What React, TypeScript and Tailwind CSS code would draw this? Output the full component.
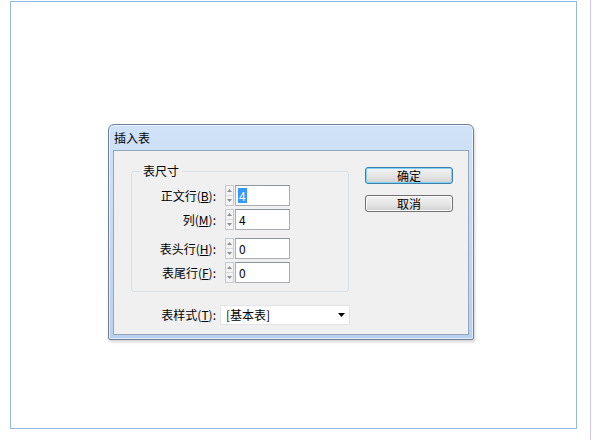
import React from "react";

const font = { fontFamily: '"Noto Sans CJK SC", "Noto Sans", sans-serif' };

const Spinner = () => (
  <div className="flex h-[21px] w-[9px] flex-col border border-[#c5c9d0] bg-[#f4f4f4]">
    <div className="flex flex-1 items-center justify-center border-b border-[#d6d9de]">
      <svg width="5" height="3" viewBox="0 0 5 3">
        <path d="M2.5 0 L5 3 L0 3 Z" fill="#8a8f96" />
      </svg>
    </div>
    <div className="flex flex-1 items-center justify-center">
      <svg width="5" height="3" viewBox="0 0 5 3">
        <path d="M0 0 L5 0 L2.5 3 Z" fill="#8a8f96" />
      </svg>
    </div>
  </div>
);

interface RowProps {
  label: string;
  hotkey: string;
  value: string;
  selected?: boolean;
  className?: string;
}

const NumberRow = ({ label, hotkey, value, selected, className }: RowProps) => (
  <div className={`flex h-[21px] items-center ${className ?? ""}`}>
    <div className="w-[84px] text-right text-[12px] leading-[14px] text-black">
      {label}(<span className="underline">{hotkey}</span>):
    </div>
    <div className="ml-[9px]">
      <Spinner />
    </div>
    <div className="ml-px flex h-[21px] w-[55px] items-center border border-[#abadb3] border-t-[#8e949c] bg-white pl-[2px]">
      {selected ? (
        <span className="bg-[#3399ff] px-px text-[12px] leading-[15px] text-white">
          {value}
        </span>
      ) : (
        <span className="px-px text-[12px] leading-[15px] text-black">{value}</span>
      )}
    </div>
  </div>
);

const Button = ({ children, primary }: { children: React.ReactNode; primary?: boolean }) => (
  <button
    className={`flex h-[17px] w-[88px] items-center justify-center rounded-[3px] border bg-gradient-to-b from-[#f3f3f3] via-[#e6e6e6] to-[#d2d2d2] text-[12px] leading-[14px] text-black ${
      primary
        ? "border-[#3c7fb1] shadow-[inset_0_0_0_1px_#7fd3f0]"
        : "border-[#707070] shadow-[inset_0_0_0_1px_#fbfbfb]"
    }`}
  >
    {children}
  </button>
);

export default function App() {
  return (
    <div className="flex h-[440px] w-[600px] bg-white" style={font}>
      <div className="ml-[10px] mt-px h-[428px] w-[567px] border border-[#95b7e4]">
        <div className="pl-[97px] pt-[122px]">
          <div className="flex h-[216px] w-[366px] flex-col rounded-t-[6px] rounded-b-[2px] border border-[#6f8197] bg-gradient-to-b from-[#d0e2f7] via-[#c5daf3] to-[#b9d1ee] px-[4px] pb-[4px] shadow-[1px_2px_3px_rgba(0,0,0,0.18),inset_0_0_0_1px_rgba(255,255,255,0.55)]">
            <div className="flex h-[25px] items-center pl-[1px] text-[12px] leading-[14px] text-black">
              插入表
            </div>
            <div className="flex flex-1 border border-[#93a7be] bg-[#f0f0f0] pl-[17px]">
              <div className="flex flex-col">
                <fieldset className="mt-[13px] w-[218px] rounded-[3px] border border-[#d5dfe5] pb-[8px] pt-[7px]">
                  <legend className="ml-[8px] px-[3px] text-[12px] leading-[14px] text-black">
                    表尺寸
                  </legend>
                  <NumberRow label="正文行" hotkey="B" value="4" selected />
                  <NumberRow label="列" hotkey="M" value="4" className="mt-[3px]" />
                  <NumberRow label="表头行" hotkey="H" value="0" className="mt-[8px]" />
                  <NumberRow label="表尾行" hotkey="F" value="0" className="mt-[3px]" />
                </fieldset>
                <div className="mt-[13px] flex h-[20px] items-center">
                  <div className="w-[85px] text-right text-[12px] leading-[14px] text-black">
                    表样式(<span className="underline">T</span>):
                  </div>
                  <div className="ml-[4px] flex h-[20px] w-[130px] items-center justify-between border border-[#e2e3e6] bg-white pl-[5px] pr-[4px]">
                    <span className="text-[12px] leading-[14px] text-black">[基本表]</span>
                    <svg width="7" height="4" viewBox="0 0 7 4">
                      <path d="M0 0 L7 0 L3.5 4 Z" fill="#000" />
                    </svg>
                  </div>
                </div>
              </div>
              <div className="ml-[15px] flex flex-col">
                <div className="mt-[16px]">
                  <Button primary>确定</Button>
                </div>
                <div className="mt-[11px]">
                  <Button>取消</Button>
                </div>
              </div>
            </div>
          </div>
        </div>
      </div>
      <div className="ml-[13px] h-[440px] w-px bg-[#cfc8e6]" />
    </div>
  );
}
